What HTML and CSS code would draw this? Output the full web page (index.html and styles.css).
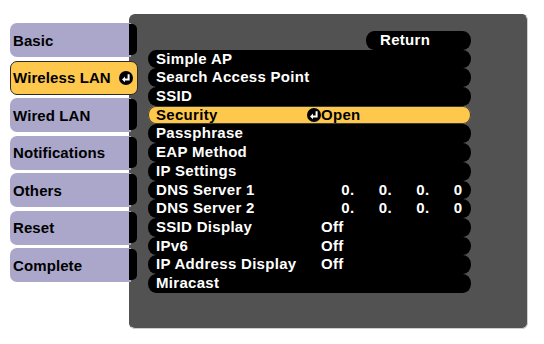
FILE: index.html
```html
<!DOCTYPE html>
<html lang="en">
<head>
    <meta charset="UTF-8">
    <title>Network Settings</title>
    <link rel="stylesheet" href="styles.css">
</head>
<body>
    <div class="screen">
        <!-- Left menu tabs -->
        <nav class="tabs">
            <div class="tab">Basic</div>
            <div class="tab tab-active">
                Wireless LAN
                <svg class="enter" viewBox="0 0 14 14"><circle cx="7" cy="7" r="7"/><path d="M9.6 3.2 V8.4 H5.4" fill="none" stroke="#fff" stroke-width="2"/><path d="M3 8.4 L6 5.6 V11.2 Z" fill="#fff"/></svg>
            </div>
            <div class="tab">Wired LAN</div>
            <div class="tab">Notifications</div>
            <div class="tab">Others</div>
            <div class="tab">Reset</div>
            <div class="tab">Complete</div>
        </nav>

        <!-- Settings panel -->
        <section class="panel">
            <div class="menu">
                <div class="row row-return"><span class="return">Return</span></div>
                <div class="row"><span class="label">Simple AP</span></div>
                <div class="row"><span class="label">Search Access Point</span></div>
                <div class="row"><span class="label">SSID</span></div>
                <div class="row row-active">
                    <span class="label">Security</span>
                    <span class="value">
                        <svg class="enter enter-value" viewBox="0 0 14 14"><circle cx="7" cy="7" r="7"/><path d="M9.6 3.2 V8.4 H5.4" fill="none" stroke="#fff" stroke-width="2"/><path d="M3 8.4 L6 5.6 V11.2 Z" fill="#fff"/></svg>Open
                    </span>
                </div>
                <div class="row"><span class="label">Passphrase</span></div>
                <div class="row"><span class="label">EAP Method</span></div>
                <div class="row"><span class="label">IP Settings</span></div>
                <div class="row">
                    <span class="label">DNS Server 1</span>
                    <span class="value ip"><span class="octet">0<i>.</i></span><span class="octet">0<i>.</i></span><span class="octet">0<i>.</i></span><span class="octet">0<i></i></span></span>
                </div>
                <div class="row">
                    <span class="label">DNS Server 2</span>
                    <span class="value ip"><span class="octet">0<i>.</i></span><span class="octet">0<i>.</i></span><span class="octet">0<i>.</i></span><span class="octet">0<i></i></span></span>
                </div>
                <div class="row"><span class="label">SSID Display</span><span class="value">Off</span></div>
                <div class="row"><span class="label">IPv6</span><span class="value">Off</span></div>
                <div class="row"><span class="label">IP Address Display</span><span class="value">Off</span></div>
                <div class="row"><span class="label">Miracast</span></div>
            </div>
        </section>
    </div>
</body>
</html>
```

FILE: styles.css
```css
:root {
    --tab-color: #aaa7ca;
    --active-color: #fdc84c;
    --panel-color: #525252;
    --row-height: 18.7px;
}

body {
    margin: 0;
    background: #fff;
    font-family: 'Liberation Sans', Arial, sans-serif;
    font-weight: 700;
    font-size: 15px;
    letter-spacing: 0.3px;
}

.screen {
    display: flex;
    align-items: flex-start;
    padding: 14px 0 0 10px;
}

/* Left tabs */
.tabs {
    display: flex;
    flex-direction: column;
    gap: 3.5px;
    width: 121px;
    margin-top: 9px;
    margin-right: -2px;
    position: relative;
    z-index: 2;
    letter-spacing: 0.1px;
}

.tab {
    position: relative;
    height: 34px;
    box-sizing: border-box;
    display: flex;
    align-items: center;
    padding-left: 3px;
    background: var(--tab-color);
    border-radius: 7px 0 0 7px;
    color: #000;
}

.tab::after {
    content: "";
    position: absolute;
    top: 1px;
    bottom: 2px;
    right: -6px;
    width: 8px;
    background: #000;
    border-radius: 0 5px 5px 0;
}

.tab-active {
    width: 128px;
    background: var(--active-color);
    border: 1px solid #2a2a2a;
    border-radius: 7px;
    padding-left: 2px;
    z-index: 1;
}

.tab-active::after {
    display: none;
}

.enter {
    width: 14px;
    height: 14px;
    fill: #000;
    flex-shrink: 0;
}

.tab .enter {
    margin-left: auto;
    margin-right: 4px;
}

/* Settings panel */
.panel {
    width: 399px;
    height: 315px;
    box-sizing: border-box;
    padding: 16px 0 0 18px;
    background: var(--panel-color);
    border: 1px solid var(--panel-color);
    border-right-color: #cfcfcf;
    border-bottom-color: #cfcfcf;
    border-radius: 6px;
}

.menu {
    width: 323px;
    display: flex;
    flex-direction: column;
}

.row {
    display: flex;
    align-items: center;
    height: var(--row-height);
    background: #000;
    border-radius: 8px / 9.35px;
    color: #fff;
    line-height: var(--row-height);
    white-space: nowrap;
}

.row-return {
    background: transparent;
    justify-content: flex-end;
}

.return {
    width: 105px;
    height: var(--row-height);
    box-sizing: border-box;
    padding-left: 14px;
    background: #000;
    border-radius: 8px / 9.35px;
}

.row-active {
    background: var(--active-color);
    color: #000;
    box-shadow: inset 0 0 0 1px #3a3a3a;
}

.label {
    width: 165px;
    padding-left: 8px;
    flex-shrink: 0;
}

.value {
    display: flex;
    align-items: center;
}

.enter-value {
    margin-left: -14px;
}

.ip {
    margin-left: -4.3px;
}

.octet {
    width: 37.5px;
    display: flex;
    justify-content: flex-end;
}

.octet i {
    font-style: normal;
    width: 4.2px;
}
```
